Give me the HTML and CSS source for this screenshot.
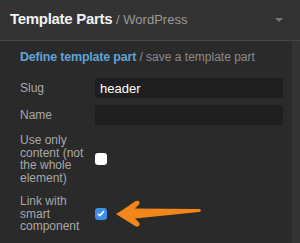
FILE: index.html
```html
<!DOCTYPE html>
<html lang="en">
<head>
  <meta charset="UTF-8">
  <title>Template Parts</title>
  <link rel="stylesheet" href="styles.css">
</head>
<body>
  <div class="header">
    <h1>Template Parts <span class="crumb">/ WordPress</span></h1>
    <span class="caret"></span>
  </div>

  <div class="panel">
    <h2>Define template part <span class="sub">/ save a template part</span></h2>

    <div class="row">
      <label for="slug">Slug</label>
      <input type="text" id="slug" value="header">
    </div>
    <div class="row">
      <label for="name">Name</label>
      <input type="text" id="name">
    </div>
    <div class="row check-row">
      <label>Use only content (not the whole element)</label>
      <span class="box"></span>
    </div>
    <div class="row check-row">
      <label>Link with smart component</label>
      <span class="box checked">
        <svg width="8" height="7" viewBox="0 0 8 7"><path d="M1 3.8 L3 5.6 L7 1" fill="none" stroke="#fff" stroke-width="1.6"/></svg>
      </span>
      <!-- flecha indicadora -->
      <svg class="arrow" width="90" height="30" viewBox="0 0 90 30">
        <path d="M3 15 C10 11 17 6 22 2.5 C25 0.5 28 3 26 5.5 L22 9.5 L86 10 C88.5 10 88.5 13 86 13 L22 19.5 L26 23.5 C28 26.5 25 28.5 22 27 C16 23 9 19 3 15 Z" fill="#f3861a"/>
      </svg>
    </div>
  </div>
</body>
</html>
```

FILE: styles.css
```css
body {
  margin: 0;
  background: #333333;
  font-family: "Liberation Sans", Arial, sans-serif;
  width: 300px;
  height: 243px;
  overflow: hidden;
}
.header {
  height: 40px;
  display: flex;
  align-items: center;
  justify-content: space-between;
  padding: 0 17px 0 10px;
  border-bottom: 1px solid #474747;
}
h1 {
  margin: 0 0 4px;
  font-size: 15px;
  color: #f2f2f2;
  letter-spacing: -0.3px;
}
.crumb {
  font-weight: normal;
  font-size: 13px;
  color: #9a9a9a;
  letter-spacing: 0;
}
.caret {
  width: 0;
  height: 0;
  border-left: 4px solid transparent;
  border-right: 4px solid transparent;
  border-top: 4px solid #777;
}
.panel {
  width: 292px;
  height: 202px;
  background: #2a2a2a;
  padding: 9px 8px 0 20px;
  box-sizing: border-box;
}
h2 {
  margin: 0 0 14px;
  font-size: 12.5px;
  color: #5fa3d8;
  letter-spacing: -0.2px;
}
.sub {
  font-weight: normal;
  color: #8a8a8a;
  font-size: 12px;
  letter-spacing: 0;
}
.row {
  display: flex;
  align-items: center;
  margin-bottom: 7px;
  position: relative;
}
.check-row {
  padding: 2px 0;
}
label {
  width: 75px;
  font-size: 12px;
  line-height: 12.5px;
  color: #a8a8a8;
}
input {
  width: 188px;
  height: 20px;
  box-sizing: border-box;
  border: none;
  background: #1f1f1f;
  color: #fff;
  font-family: inherit;
  font-size: 13px;
  padding: 0 5px;
}
.box {
  width: 12px;
  height: 12px;
  background: #fff;
  border-radius: 3px;
  display: flex;
  align-items: center;
  justify-content: center;
}
.box.checked {
  background: #3b8fe8;
}
.arrow {
  position: absolute;
  left: 93px;
  top: 50%;
  margin-top: -15px;
}
```
